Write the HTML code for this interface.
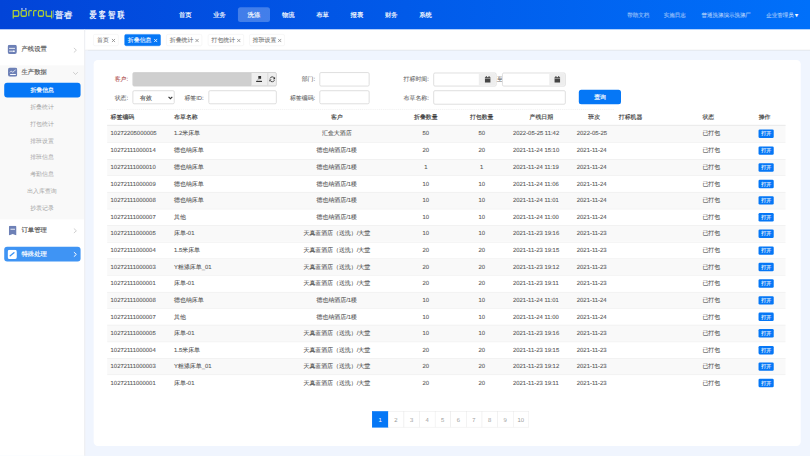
<!DOCTYPE html>
<html><head><meta charset="utf-8">
<style>
html,body{margin:0;padding:0;width:810px;height:456px;overflow:hidden;background:#f0f5fe;}
*{box-sizing:border-box;}
#w{position:absolute;left:0;top:0;width:1920px;height:1080px;transform:scale(0.421875);transform-origin:0 0;font-family:"Liberation Sans",sans-serif;background:#f0f5fe;color:#333;overflow:hidden;font-weight:500;-webkit-text-stroke:0.35px currentColor;text-rendering:geometricPrecision;}
.a{position:absolute;}
#hdr{left:0;top:0;width:1920px;height:69.8px;background:linear-gradient(90deg,#0244d8 0%,#0070fa 100%);}
.nav{position:absolute;top:37.2px;transform:translate(-50%,-50%);color:#fff;font-size:15px;white-space:nowrap;line-height:18px;}
.hr{position:absolute;top:36.3px;transform:translateY(-50%);color:rgba(255,255,255,0.52);font-size:13px;white-space:nowrap;line-height:16px;}
#side{left:0;top:69.8px;width:202px;height:1011px;background:#fff;border-right:2.5px solid #e6e8ec;}
.mi{position:absolute;left:0;width:199px;font-size:15px;color:#555;}
.sub{position:absolute;left:0;width:199px;text-align:center;font-size:14px;color:#a4a4a4;-webkit-text-stroke:0;line-height:18px;transform:translateY(-50%);}
#tabs{left:202px;top:69.8px;width:1720px;height:49.2px;background:#fff;border-bottom:1px solid #e4e4e4;box-shadow:0 1px 2px rgba(0,0,0,0.05);}
.tab{position:absolute;top:81px;height:28px;border:1px solid #ececec;border-radius:4px;font-size:14px;color:#777;line-height:26px;-webkit-text-stroke:0.2px currentColor;padding-left:7.5px;white-space:nowrap;}
.tab svg{position:absolute;right:6px;top:9px;}
#card{left:222px;top:142px;width:1676px;height:915px;background:#fff;border-radius:10px;}
.lbl{position:absolute;font-size:14px;color:#666;-webkit-text-stroke:0.15px currentColor;line-height:18px;transform:translateY(-50%);white-space:nowrap;text-align:right;}
.inp{position:absolute;border:2px solid #d9d9d9;border-radius:4px;background:#fff;overflow:hidden;}
.row{position:absolute;left:253.6px;width:1608px;height:39.4px;border-top:1px solid #e8e8e8;font-size:14px;color:#555;}
.row.g{background:#f9f9f9;}
.c{position:absolute;top:0;height:100%;line-height:37px;white-space:nowrap;padding-left:8.5px;-webkit-text-stroke:0.2px currentColor;}
.cc{text-align:center;padding-left:0;}
.th{position:absolute;top:0;line-height:36px;font-weight:500;-webkit-text-stroke:0.3px currentColor;font-size:14px;color:#333;white-space:nowrap;}
.btn{position:absolute;left:8.5px;top:9px;width:36px;height:20px;background:#0577f6;border-radius:3px;color:#fff;font-size:12px;line-height:20px;text-align:center;}
.pg{position:absolute;top:974.5px;height:38px;border:1px solid #e6e6e6;font-size:14px;color:#999;text-align:center;line-height:38.5px;background:#fff;-webkit-text-stroke:0;}

</style></head>
<body><div id="w">
<div id="hdr" class="a">
<svg class="a" style="left:0;top:0" width="200" height="68" viewBox="0 0 200 68">
<g fill="none" stroke="#abcf38" stroke-width="3" stroke-linejoin="round">
<path d="M31.4 44 V25.4 H41.5 Q44.5 25.4 44.5 28.4 V35.5 Q44.5 38.5 41.5 38.5 H31.4"/>
<rect x="50.1" y="25.4" width="12.4" height="13.1" rx="3"/>
<path d="M68.3 38.5 V28.4 Q68.3 25.4 71.3 25.4 H75.6"/>
<path d="M79.7 38.5 V28.4 Q79.7 25.4 82.7 25.4 H87"/>
<rect x="91.1" y="25.4" width="11.9" height="13.1" rx="3"/>
<path d="M109.4 25.4 V35.5 Q109.4 38.5 112.4 38.5 H122.5 M122.5 25.4 V44"/>
</g>
<g fill="#9db6f2"><rect x="50" y="19.2" width="4" height="4"/><rect x="59.3" y="19.2" width="3.7" height="4"/></g>
<rect x="126" y="23.7" width="2" height="17.8" fill="#5f8ce6"/>
<text x="130" y="42" font-size="21" fill="#fff" font-family="Liberation Sans,sans-serif" stroke="#fff" stroke-width="0.35">普睿</text>
</svg>

<div class="a" style="left:212px;top:23px;font-size:22px;letter-spacing:7.6px;color:#fff;line-height:24px;transform:scaleX(0.75);transform-origin:0 0;white-space:nowrap;-webkit-text-stroke:0.6px #fff;font-family:'Liberation Serif',serif;">爱客智联</div>
<div class="a" style="left:563.7px;top:16.6px;width:76.3px;height:35.3px;border-radius:6px;background:rgba(255,255,255,0.26);"></div>
<div class="nav" style="left:439.0px">首页</div>
<div class="nav" style="left:520.4px">业务</div>
<div class="nav" style="left:601.8px">洗涤</div>
<div class="nav" style="left:683.2px">物流</div>
<div class="nav" style="left:764.6px">布草</div>
<div class="nav" style="left:846.0px">报表</div>
<div class="nav" style="left:927.4px">财务</div>
<div class="nav" style="left:1008.8px">系统</div>
<div class="hr" style="left:1486.7px">帮助文档</div>
<div class="hr" style="left:1573.5px">实施日志</div>
<div class="hr" style="left:1662.8px">普通洗涤演示洗涤厂</div>
<div class="hr" style="left:1816.2px">企业管理员<span style="font-size:12px;margin-left:1px;color:#fff;">&#9660;</span></div>
</div>
<div id="side" class="a">
<!-- positions relative to sidebar top (68) -->
<svg class="a" style="left:18.4px;top:36px" width="22" height="22" viewBox="0 0 22 22"><rect x="0" y="0" width="22" height="22" rx="5" fill="#6d80b6"/><rect x="3.5" y="7.5" width="14" height="2" fill="#fff"/><rect x="3.5" y="14.3" width="14" height="2" fill="#fff"/><circle cx="14.5" cy="15.3" r="1.8" fill="#fff"/></svg>
<div class="a" style="left:51px;top:38.5px;font-size:15px;color:#5a5a5a;line-height:18px;">产线设置</div>
<svg class="a" style="left:172px;top:42px" width="12" height="14" viewBox="0 0 12 14"><path d="M3 1.5 L9 7 L3 12.5" fill="none" stroke="#aaa" stroke-width="1.3"/></svg>
<div class="a" style="left:0;top:85.4px;width:199px;height:365px;background:#f9f9f9;"></div>
<svg class="a" style="left:18.7px;top:90.5px" width="22" height="22" viewBox="0 0 22 22"><rect x="0" y="0" width="22" height="22" rx="5" fill="#6d80b6"/><path d="M4.5 11.5 L7.5 8.5 L11 11 L14 9.5 L18 5" fill="none" stroke="#fff" stroke-width="1.8" stroke-linejoin="round"/><rect x="5" y="15.5" width="13.5" height="2.3" fill="#fff"/></svg>
<div class="a" style="left:51px;top:93.7px;font-size:15px;color:#5a5a5a;line-height:18px;">生产数据</div>
<svg class="a" style="left:172px;top:99.5px" width="14" height="10" viewBox="0 0 14 10"><path d="M1.5 2 L7 7.5 L12.5 2" fill="none" stroke="#aaa" stroke-width="1.3"/></svg>
<div class="a" style="left:9.5px;top:126px;width:181px;height:35px;border-radius:7px;background:#0577f6;color:#fff;font-size:14px;line-height:35px;text-align:center;">折叠信息</div>
<div class="sub" style="top:183px">折叠统计</div>
<div class="sub" style="top:223px">打包统计</div>
<div class="sub" style="top:263px">排班设置</div>
<div class="sub" style="top:303px">排班信息</div>
<div class="sub" style="top:343px">考勤信息</div>
<div class="sub" style="top:383px">出入库查询</div>
<div class="sub" style="top:423px">抄表记录</div>
<svg class="a" style="left:21px;top:465px" width="18.3" height="22.8" viewBox="0 0 18.3 22.8"><path d="M0 3.5 Q0 0 3.5 0 H14.8 Q18.3 0 18.3 3.5 V23.3 L9.15 19.8 L0 23.3 Z" fill="#6d80b6"/><rect x="3.8" y="7.3" width="10.7" height="2" fill="#fff"/></svg>
<div class="a" style="left:51px;top:468px;font-size:15px;color:#5a5a5a;line-height:18px;">订单管理</div>
<svg class="a" style="left:172px;top:470px" width="12" height="14" viewBox="0 0 12 14"><path d="M3 1.5 L9 7 L3 12.5" fill="none" stroke="#aaa" stroke-width="1.3"/></svg>
<div class="a" style="left:10px;top:515.6px;width:181px;height:35px;border-radius:7px;background:#3f94f4;"></div>
<svg class="a" style="left:18.4px;top:522px" width="22" height="22" viewBox="0 0 22 22"><rect x="0" y="0" width="22" height="22" rx="5" fill="#fff"/><path d="M6.3 14.2 L15 7.2" fill="none" stroke="#3f94f4" stroke-width="3.2" stroke-linecap="round"/></svg>
<div class="a" style="left:51px;top:524px;font-size:15px;color:#fff;line-height:18px;">特殊处理</div>
<svg class="a" style="left:172px;top:526px" width="12" height="14" viewBox="0 0 12 14"><path d="M3 1.5 L9 7 L3 12.5" fill="none" stroke="#fff" stroke-width="2.2"/></svg>

</div>
<div id="tabs" class="a"></div>
<div class="tab" style="left:221.4px;width:59.7px;">首页<svg width="10" height="10" viewBox="0 0 10 10"><path d="M1 1 L9 9 M9 1 L1 9" stroke="#888" stroke-width="1.9"/></svg></div>
<div class="tab" style="left:294.6px;width:86.6px;background:#0577f6;border-color:#0577f6;color:#fff;">折叠信息<svg width="10" height="10" viewBox="0 0 10 10"><path d="M1 1 L9 9 M9 1 L1 9" stroke="#fff" stroke-width="1.9"/></svg></div>
<div class="tab" style="left:394px;width:85.3px;">折叠统计<svg width="10" height="10" viewBox="0 0 10 10"><path d="M1 1 L9 9 M9 1 L1 9" stroke="#888" stroke-width="1.9"/></svg></div>
<div class="tab" style="left:492.8px;width:84.9px;">打包统计<svg width="10" height="10" viewBox="0 0 10 10"><path d="M1 1 L9 9 M9 1 L1 9" stroke="#888" stroke-width="1.9"/></svg></div>
<div class="tab" style="left:590.7px;width:84.6px;">排班设置<svg width="10" height="10" viewBox="0 0 10 10"><path d="M1 1 L9 9 M9 1 L1 9" stroke="#888" stroke-width="1.9"/></svg></div>
<div id="card" class="a"></div>
<div class="lbl" style="left:271.9px;top:188.3px;color:#a94442;">客户:</div>
<div class="inp" style="left:314.1px;top:171px;width:341.8px;height:34px;background:#cfcfcf;border-color:#cfcfcf;">
  <div class="a" style="left:278.6px;top:0;width:39.2px;height:30px;background:#eeeeee;border-left:2px solid #d9d9d9;"></div>
  <div class="a" style="left:317.8px;top:0;width:22px;height:30px;background:#eeeeee;border-left:2px solid #d9d9d9;"></div>
</div>
<div class="lbl" style="left:271.9px;top:230.6px;">状态:</div>
<div class="inp" style="left:314.1px;top:213.8px;width:100px;height:33px;"><div class="a" style="left:16px;top:6px;font-size:14px;color:#555;line-height:20px;">有效</div>
<svg class="a" style="left:82px;top:11px" width="12" height="10" viewBox="0 0 12 10"><path d="M1.5 2.5 L6 7 L10.5 2.5" fill="none" stroke="#333" stroke-width="2.6"/></svg></div>
<div class="lbl" style="left:437.1px;top:230.6px;">标签ID:</div>
<div class="inp" style="left:493.8px;top:213.8px;width:162.1px;height:33px;"></div>
<div class="lbl" style="left:715px;top:188.3px;">部门:</div>
<div class="inp" style="left:756.9px;top:171.1px;width:119px;height:34px;"></div>
<div class="lbl" style="left:687.2px;top:230.6px;">标签编码:</div>
<div class="inp" style="left:756.9px;top:214px;width:119px;height:33px;"></div>
<div class="lbl" style="left:956.7px;top:188.3px;">打标时间:</div>
<div class="inp" style="left:1026.8px;top:171.6px;width:150.6px;height:33px;"><div class="a" style="left:106.6px;top:0;width:42px;height:29px;background:#eeeeee;"></div></div>
<div class="lbl" style="left:1178px;top:188.3px;">至</div>
<div class="inp" style="left:1190.4px;top:171.6px;width:150.3px;height:33px;"><div class="a" style="left:109.9px;top:0;width:38.4px;height:29px;background:#eeeeee;"></div></div>
<div class="lbl" style="left:956.7px;top:230.6px;">布草名称:</div>
<div class="inp" style="left:1026.8px;top:213.6px;width:313.9px;height:34px;"></div>
<div class="a" style="left:1372.4px;top:213.3px;width:100px;height:34px;border-radius:6px;background:#0577f6;color:#fff;font-size:14px;line-height:34px;text-align:center;">查询</div>
<div class="a" style="left:253.6px;top:259px;width:1201.4px;height:0;border-top:1px dashed #e3e3e3;"></div>
<svg class="a" style="left:606.5px;top:180px" width="15" height="16" viewBox="0 0 15 16"><rect x="5.3" y="0" width="6.6" height="6.8" fill="#333"/><path d="M6 6.5 L3.2 10.8" stroke="#888" stroke-width="1.6"/><path d="M8 6.8 L8 9.5 L11 9.5" fill="none" stroke="#bbb" stroke-width="1"/><rect x="0" y="11.6" width="14" height="2.8" fill="#333"/></svg>
<svg class="a" style="left:637.5px;top:180px" width="15" height="16" viewBox="0 0 15 16"><path d="M12.6 5.2 A5.8 5.8 0 0 0 2 6" fill="none" stroke="#333" stroke-width="2"/><path d="M2 10.8 A5.8 5.8 0 0 0 12.6 10" fill="none" stroke="#333" stroke-width="2"/><path d="M14.2 2 V7.6 H8.8 Z" fill="#333"/><path d="M0.4 14 V8.4 H5.8 Z" fill="#333"/></svg>
<svg class="a" style="left:1149.4px;top:180px" width="14" height="16" viewBox="0 0 14 16"><rect x="0" y="3" width="14" height="13" fill="#444"/><rect x="0" y="6" width="14" height="1" fill="#eee"/><rect x="2.5" y="0.5" width="2.5" height="4" fill="#444"/><rect x="9" y="0.5" width="2.5" height="4" fill="#444"/></svg>
<svg class="a" style="left:1313.5px;top:180px" width="14" height="16" viewBox="0 0 14 16"><rect x="0" y="3" width="14" height="13" fill="#444"/><rect x="0" y="6" width="14" height="1" fill="#eee"/><rect x="2.5" y="0.5" width="2.5" height="4" fill="#444"/><rect x="9" y="0.5" width="2.5" height="4" fill="#444"/></svg>

<div class="a" style="left:253.6px;top:260px;width:1608px;height:38px;border-bottom:2px solid #dddddd;">
<div class="th" style="left:8.5px;">标签编码</div>
<div class="th" style="left:159.0px;">布草名称</div>
<div class="th" style="left:400.6px;width:288.3px;text-align:center;">客户</div>
<div class="th" style="left:688.9px;width:133.6px;text-align:center;">折叠数量</div>
<div class="th" style="left:822.5px;width:131.4px;text-align:center;">打包数量</div>
<div class="th" style="left:953.9px;width:151.2px;text-align:center;">产线日期</div>
<div class="th" style="left:1105.1px;width:99.6px;text-align:center;">班次</div>
<div class="th" style="left:1213.2px;">打标机器</div>
<div class="th" style="left:1411.3px;">状态</div>
<div class="th" style="left:1544.8px;">操作</div>
</div>
<div class="row g" style="top:298.0px;border-top:none;">
<div class="c" style="left:0.0px;">10272205000005</div>
<div class="c" style="left:150.5px;">1.2米床单</div>
<div class="c cc" style="left:400.6px;width:288.3px;">汇金大酒店</div>
<div class="c cc" style="left:688.9px;width:133.6px;">50</div>
<div class="c cc" style="left:822.5px;width:131.4px;">50</div>
<div class="c" style="left:953.9px;">2022-05-25 11:42</div>
<div class="c" style="left:1105.1px;">2022-05-25</div>
<div class="c" style="left:1204.7px;"></div>
<div class="c" style="left:1402.8px;">已打包</div>
<div class="c" style="left:1536.3px;width:71.8px;"><div class="btn">打开</div></div>
</div>
<div class="row" style="top:337.4px;">
<div class="c" style="left:0.0px;">10272111000014</div>
<div class="c" style="left:150.5px;">德也纳床单</div>
<div class="c cc" style="left:400.6px;width:288.3px;">德也纳酒店/1楼</div>
<div class="c cc" style="left:688.9px;width:133.6px;">20</div>
<div class="c cc" style="left:822.5px;width:131.4px;">20</div>
<div class="c" style="left:953.9px;">2021-11-24 15:10</div>
<div class="c" style="left:1105.1px;">2021-11-24</div>
<div class="c" style="left:1204.7px;"></div>
<div class="c" style="left:1402.8px;">已打包</div>
<div class="c" style="left:1536.3px;width:71.8px;"><div class="btn">打开</div></div>
</div>
<div class="row g" style="top:376.7px;">
<div class="c" style="left:0.0px;">10272111000010</div>
<div class="c" style="left:150.5px;">德也纳床单</div>
<div class="c cc" style="left:400.6px;width:288.3px;">德也纳酒店/1楼</div>
<div class="c cc" style="left:688.9px;width:133.6px;">1</div>
<div class="c cc" style="left:822.5px;width:131.4px;">1</div>
<div class="c" style="left:953.9px;">2021-11-24 11:19</div>
<div class="c" style="left:1105.1px;">2021-11-24</div>
<div class="c" style="left:1204.7px;"></div>
<div class="c" style="left:1402.8px;">已打包</div>
<div class="c" style="left:1536.3px;width:71.8px;"><div class="btn">打开</div></div>
</div>
<div class="row" style="top:416.1px;">
<div class="c" style="left:0.0px;">10272111000009</div>
<div class="c" style="left:150.5px;">德也纳床单</div>
<div class="c cc" style="left:400.6px;width:288.3px;">德也纳酒店/1楼</div>
<div class="c cc" style="left:688.9px;width:133.6px;">10</div>
<div class="c cc" style="left:822.5px;width:131.4px;">10</div>
<div class="c" style="left:953.9px;">2021-11-24 11:06</div>
<div class="c" style="left:1105.1px;">2021-11-24</div>
<div class="c" style="left:1204.7px;"></div>
<div class="c" style="left:1402.8px;">已打包</div>
<div class="c" style="left:1536.3px;width:71.8px;"><div class="btn">打开</div></div>
</div>
<div class="row g" style="top:455.4px;">
<div class="c" style="left:0.0px;">10272111000008</div>
<div class="c" style="left:150.5px;">德也纳床单</div>
<div class="c cc" style="left:400.6px;width:288.3px;">德也纳酒店/1楼</div>
<div class="c cc" style="left:688.9px;width:133.6px;">10</div>
<div class="c cc" style="left:822.5px;width:131.4px;">10</div>
<div class="c" style="left:953.9px;">2021-11-24 11:01</div>
<div class="c" style="left:1105.1px;">2021-11-24</div>
<div class="c" style="left:1204.7px;"></div>
<div class="c" style="left:1402.8px;">已打包</div>
<div class="c" style="left:1536.3px;width:71.8px;"><div class="btn">打开</div></div>
</div>
<div class="row" style="top:494.8px;">
<div class="c" style="left:0.0px;">10272111000007</div>
<div class="c" style="left:150.5px;">其他</div>
<div class="c cc" style="left:400.6px;width:288.3px;">德也纳酒店/1楼</div>
<div class="c cc" style="left:688.9px;width:133.6px;">10</div>
<div class="c cc" style="left:822.5px;width:131.4px;">10</div>
<div class="c" style="left:953.9px;">2021-11-24 11:00</div>
<div class="c" style="left:1105.1px;">2021-11-24</div>
<div class="c" style="left:1204.7px;"></div>
<div class="c" style="left:1402.8px;">已打包</div>
<div class="c" style="left:1536.3px;width:71.8px;"><div class="btn">打开</div></div>
</div>
<div class="row g" style="top:534.1px;">
<div class="c" style="left:0.0px;">10272111000005</div>
<div class="c" style="left:150.5px;">床单-01</div>
<div class="c cc" style="left:400.6px;width:288.3px;">天真蓝酒店（送洗）/大堂</div>
<div class="c cc" style="left:688.9px;width:133.6px;">10</div>
<div class="c cc" style="left:822.5px;width:131.4px;">10</div>
<div class="c" style="left:953.9px;">2021-11-23 19:16</div>
<div class="c" style="left:1105.1px;">2021-11-23</div>
<div class="c" style="left:1204.7px;"></div>
<div class="c" style="left:1402.8px;">已打包</div>
<div class="c" style="left:1536.3px;width:71.8px;"><div class="btn">打开</div></div>
</div>
<div class="row" style="top:573.5px;">
<div class="c" style="left:0.0px;">10272111000004</div>
<div class="c" style="left:150.5px;">1.5米床单</div>
<div class="c cc" style="left:400.6px;width:288.3px;">天真蓝酒店（送洗）/大堂</div>
<div class="c cc" style="left:688.9px;width:133.6px;">20</div>
<div class="c cc" style="left:822.5px;width:131.4px;">20</div>
<div class="c" style="left:953.9px;">2021-11-23 19:15</div>
<div class="c" style="left:1105.1px;">2021-11-23</div>
<div class="c" style="left:1204.7px;"></div>
<div class="c" style="left:1402.8px;">已打包</div>
<div class="c" style="left:1536.3px;width:71.8px;"><div class="btn">打开</div></div>
</div>
<div class="row g" style="top:612.8px;">
<div class="c" style="left:0.0px;">10272111000003</div>
<div class="c" style="left:150.5px;">Y粗涤床单_01</div>
<div class="c cc" style="left:400.6px;width:288.3px;">天真蓝酒店（送洗）/大堂</div>
<div class="c cc" style="left:688.9px;width:133.6px;">20</div>
<div class="c cc" style="left:822.5px;width:131.4px;">20</div>
<div class="c" style="left:953.9px;">2021-11-23 19:12</div>
<div class="c" style="left:1105.1px;">2021-11-23</div>
<div class="c" style="left:1204.7px;"></div>
<div class="c" style="left:1402.8px;">已打包</div>
<div class="c" style="left:1536.3px;width:71.8px;"><div class="btn">打开</div></div>
</div>
<div class="row" style="top:652.2px;">
<div class="c" style="left:0.0px;">10272111000001</div>
<div class="c" style="left:150.5px;">床单-01</div>
<div class="c cc" style="left:400.6px;width:288.3px;">天真蓝酒店（送洗）/大堂</div>
<div class="c cc" style="left:688.9px;width:133.6px;">20</div>
<div class="c cc" style="left:822.5px;width:131.4px;">20</div>
<div class="c" style="left:953.9px;">2021-11-23 19:11</div>
<div class="c" style="left:1105.1px;">2021-11-23</div>
<div class="c" style="left:1204.7px;"></div>
<div class="c" style="left:1402.8px;">已打包</div>
<div class="c" style="left:1536.3px;width:71.8px;"><div class="btn">打开</div></div>
</div>
<div class="row g" style="top:691.5px;">
<div class="c" style="left:0.0px;">10272111000008</div>
<div class="c" style="left:150.5px;">德也纳床单</div>
<div class="c cc" style="left:400.6px;width:288.3px;">德也纳酒店/1楼</div>
<div class="c cc" style="left:688.9px;width:133.6px;">10</div>
<div class="c cc" style="left:822.5px;width:131.4px;">10</div>
<div class="c" style="left:953.9px;">2021-11-24 11:01</div>
<div class="c" style="left:1105.1px;">2021-11-24</div>
<div class="c" style="left:1204.7px;"></div>
<div class="c" style="left:1402.8px;">已打包</div>
<div class="c" style="left:1536.3px;width:71.8px;"><div class="btn">打开</div></div>
</div>
<div class="row" style="top:730.9px;">
<div class="c" style="left:0.0px;">10272111000007</div>
<div class="c" style="left:150.5px;">其他</div>
<div class="c cc" style="left:400.6px;width:288.3px;">德也纳酒店/1楼</div>
<div class="c cc" style="left:688.9px;width:133.6px;">10</div>
<div class="c cc" style="left:822.5px;width:131.4px;">10</div>
<div class="c" style="left:953.9px;">2021-11-24 11:00</div>
<div class="c" style="left:1105.1px;">2021-11-24</div>
<div class="c" style="left:1204.7px;"></div>
<div class="c" style="left:1402.8px;">已打包</div>
<div class="c" style="left:1536.3px;width:71.8px;"><div class="btn">打开</div></div>
</div>
<div class="row g" style="top:770.2px;">
<div class="c" style="left:0.0px;">10272111000005</div>
<div class="c" style="left:150.5px;">床单-01</div>
<div class="c cc" style="left:400.6px;width:288.3px;">天真蓝酒店（送洗）/大堂</div>
<div class="c cc" style="left:688.9px;width:133.6px;">10</div>
<div class="c cc" style="left:822.5px;width:131.4px;">10</div>
<div class="c" style="left:953.9px;">2021-11-23 19:16</div>
<div class="c" style="left:1105.1px;">2021-11-23</div>
<div class="c" style="left:1204.7px;"></div>
<div class="c" style="left:1402.8px;">已打包</div>
<div class="c" style="left:1536.3px;width:71.8px;"><div class="btn">打开</div></div>
</div>
<div class="row" style="top:809.5px;">
<div class="c" style="left:0.0px;">10272111000004</div>
<div class="c" style="left:150.5px;">1.5米床单</div>
<div class="c cc" style="left:400.6px;width:288.3px;">天真蓝酒店（送洗）/大堂</div>
<div class="c cc" style="left:688.9px;width:133.6px;">20</div>
<div class="c cc" style="left:822.5px;width:131.4px;">20</div>
<div class="c" style="left:953.9px;">2021-11-23 19:15</div>
<div class="c" style="left:1105.1px;">2021-11-23</div>
<div class="c" style="left:1204.7px;"></div>
<div class="c" style="left:1402.8px;">已打包</div>
<div class="c" style="left:1536.3px;width:71.8px;"><div class="btn">打开</div></div>
</div>
<div class="row g" style="top:848.9px;">
<div class="c" style="left:0.0px;">10272111000003</div>
<div class="c" style="left:150.5px;">Y粗涤床单_01</div>
<div class="c cc" style="left:400.6px;width:288.3px;">天真蓝酒店（送洗）/大堂</div>
<div class="c cc" style="left:688.9px;width:133.6px;">20</div>
<div class="c cc" style="left:822.5px;width:131.4px;">20</div>
<div class="c" style="left:953.9px;">2021-11-23 19:12</div>
<div class="c" style="left:1105.1px;">2021-11-23</div>
<div class="c" style="left:1204.7px;"></div>
<div class="c" style="left:1402.8px;">已打包</div>
<div class="c" style="left:1536.3px;width:71.8px;"><div class="btn">打开</div></div>
</div>
<div class="row" style="top:888.2px;">
<div class="c" style="left:0.0px;">10272111000001</div>
<div class="c" style="left:150.5px;">床单-01</div>
<div class="c cc" style="left:400.6px;width:288.3px;">天真蓝酒店（送洗）/大堂</div>
<div class="c cc" style="left:688.9px;width:133.6px;">20</div>
<div class="c cc" style="left:822.5px;width:131.4px;">20</div>
<div class="c" style="left:953.9px;">2021-11-23 19:11</div>
<div class="c" style="left:1105.1px;">2021-11-23</div>
<div class="c" style="left:1204.7px;"></div>
<div class="c" style="left:1402.8px;">已打包</div>
<div class="c" style="left:1536.3px;width:71.8px;"><div class="btn">打开</div></div>
</div>
<div class="pg" style="left:881.5px;width:39.0px;background:#0577f6;border-color:#0577f6;color:#fff;">1</div>
<div class="pg" style="left:919.5px;width:38.0px;">2</div>
<div class="pg" style="left:956.5px;width:38.0px;">3</div>
<div class="pg" style="left:993.5px;width:38.0px;">4</div>
<div class="pg" style="left:1030.5px;width:38.0px;">5</div>
<div class="pg" style="left:1067.5px;width:38.0px;">6</div>
<div class="pg" style="left:1104.5px;width:38.0px;">7</div>
<div class="pg" style="left:1141.5px;width:38.0px;">8</div>
<div class="pg" style="left:1178.5px;width:38.0px;">9</div>
<div class="pg" style="left:1215.5px;width:38.0px;">10</div>
</div></body></html>
